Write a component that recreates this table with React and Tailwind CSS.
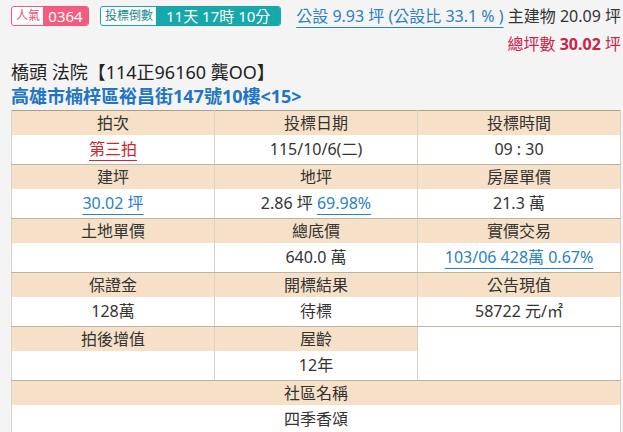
import React from "react";

const font = { fontFamily: "'Noto Sans', 'Noto Sans CJK TC', sans-serif" };

const Head = ({ children, colSpan }) => (
  <td colSpan={colSpan} className="h-[24px] p-0 bg-[#f6e0c8] border-x border-[#d9d3c6] text-center align-middle leading-none">
    {children}
  </td>
);

const Val = ({ children, colSpan }) => (
  <td colSpan={colSpan} className="h-[30px] p-0 bg-white border-x border-b border-[#d9d3c6] border-b-[#bdb5a3] text-center align-middle leading-none">
    {children}
  </td>
);

const Link = ({ children, className = "text-[#2b7fc6]" }) => (
  <span className={`underline decoration-1 underline-offset-[5px] ${className}`}>{children}</span>
);

export default function App() {
  return (
    <div className="w-[623px] h-[432px] overflow-hidden bg-[#f4f4f4] pl-[11px] pr-[2px] pt-[6px] text-[#333]" style={font}>
      {/* top badges + area summary */}
      <div className="flex items-center h-[20px] whitespace-nowrap">
        <div className="flex h-[20px] border border-[#ee5a7c] rounded-[3px] overflow-hidden bg-white">
          <span className="flex items-center pl-[4px] pr-[3px] text-[12px] text-[#e25575]">人氣</span>
          <span className="flex items-center justify-center w-[45px] bg-[#f25c7e] text-white text-[15px]">0364</span>
        </div>
        <div className="ml-[11px] flex h-[20px] border border-[#18a6a9] rounded-[3px] overflow-hidden bg-white">
          <span className="flex items-center pl-[4px] pr-[3px] text-[12px] text-[#178a8c]">投標倒數</span>
          <span className="flex items-center bg-[#16a8aa] text-white text-[15px] px-[10px]">11天 17時 10分</span>
        </div>
        <span className="ml-[15px] text-[16px]">
          <Link className="text-[#2b7fc6]">公設 9.93 坪 (公設比 33.1 % )</Link>
          <span className="text-[#333]"> 主建物 20.09 坪</span>
        </span>
      </div>
      <div className="mt-[8px] text-right text-[16px] text-[#c8254b] leading-[20px]">
        總坪數 <b>30.02</b> 坪
      </div>

      <div className="mt-[6px] text-[18px] text-[#222] leading-[24px]">橋頭 法院【114正96160 龔OO】</div>
      <div className="text-[18px] font-bold text-[#2175c3] leading-[24px]">高雄市楠梓區裕昌街147號10樓&lt;15&gt;</div>

      <table className="mt-[2px] w-full table-fixed border-collapse border border-[#a9a08c] text-[16px]">
        <tbody>
          <tr>
            <Head>拍次</Head>
            <Head>投標日期</Head>
            <Head>投標時間</Head>
          </tr>
          <tr>
            <Val><Link className="text-[#c8282f]">第三拍</Link></Val>
            <Val>115/10/6(二)</Val>
            <Val>09 : 30</Val>
          </tr>
          <tr>
            <Head>建坪</Head>
            <Head>地坪</Head>
            <Head>房屋單價</Head>
          </tr>
          <tr>
            <Val><Link>30.02 坪</Link></Val>
            <Val>2.86 坪 <Link>69.98%</Link></Val>
            <Val>21.3 萬</Val>
          </tr>
          <tr>
            <Head>土地單價</Head>
            <Head>總底價</Head>
            <Head>實價交易</Head>
          </tr>
          <tr>
            <Val></Val>
            <Val>640.0 萬</Val>
            <Val><Link>103/06 428萬 0.67%</Link></Val>
          </tr>
          <tr>
            <Head>保證金</Head>
            <Head>開標結果</Head>
            <Head>公告現值</Head>
          </tr>
          <tr>
            <Val>128萬</Val>
            <Val>待標</Val>
            <Val>58722 元/㎡</Val>
          </tr>
          <tr>
            <Head>拍後增值</Head>
            <Head>屋齡</Head>
            <td rowSpan={2} className="p-0 bg-white border-x border-b border-[#d9d3c6] border-b-[#bdb5a3]"></td>
          </tr>
          <tr>
            <Val></Val>
            <Val>12年</Val>
          </tr>
          <tr>
            <Head colSpan={3}>社區名稱</Head>
          </tr>
          <tr>
            <Val colSpan={3}>四季香頌</Val>
          </tr>
        </tbody>
      </table>
    </div>
  );
}
